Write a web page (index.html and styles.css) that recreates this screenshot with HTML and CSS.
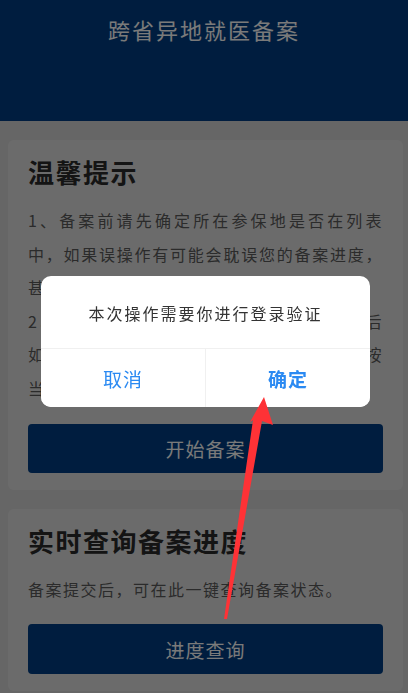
FILE: index.html
```html
<!DOCTYPE html>
<html lang='zh-cn'>

<head>
    <meta charset='utf-8' />
    <meta name='viewport' content='width=device-width, initial-scale=1, user-scalable=no' />
    <title>跨省异地就医备案</title>
    <link rel="stylesheet" href="styles.css">
</head>

<body>
    <div class='page'>
        <header class='top-bar'>
            <h1>跨省异地就医备案</h1>
        </header>

        <section class='card'>
            <h2>温馨提示</h2>
            <p class='desc'>1、备案前请先确定所在参保地是否在列表中，如果误操作有可能会耽误您的备案进度，甚至可能导致备案失败。</p>
            <p class='desc'>2、备案成功后请到定点医院就医，出院后<span class='keep'>如需</span>办理报销，请携带相关材料至参保地按<span class='keep'>当地</span>规定办理。</p>
            <button type='button' class='btn-main'>开始备案</button>
        </section>

        <section class='card'>
            <h2>实时查询备案进度</h2>
            <p class='desc'>备案提交后，可在此一键查询备案状态。</p>
            <button type='button' class='btn-main'>进度查询</button>
        </section>
    </div>

    <div class='mask'>
        <div class='dialog'>
            <div class='dialog-msg'>本次操作需要你进行登录验证</div>
            <div class='dialog-btns'>
                <button type='button' class='dialog-btn'>取消</button>
                <button type='button' class='dialog-btn ok'>确定</button>
            </div>
        </div>
    </div>

    <svg class='arrow' width='408' height='693' viewBox='0 0 408 693'>
        <polygon points='264,397 273,425 262,421 227,619 224,619 253,420 250,422' fill='#fe3236' />
    </svg>
</body>

</html>
```

FILE: styles.css
```css
body {
    margin: 0;
    font-family: "Noto Sans CJK SC", "Noto Sans", sans-serif;
    background-color: #d6d6d6;
    color: #333;
    overflow: hidden;
}

.top-bar {
    height: 121px;
    background-color: #003e84;
    padding-top: 12px;
    box-sizing: border-box;
}

.top-bar h1 {
    margin: 0;
    text-align: center;
    color: #fff;
    font-size: 22px;
    font-weight: normal;
    letter-spacing: 2px;
    line-height: 34px;
}

.card {
    background-color: #e0e0e0;
    border-radius: 6px;
    margin: 19px 5px 18px 8px;
    padding: 15px 20px 17px 20px;
}

.card h2 {
    margin: 0;
    font-size: 26px;
    line-height: 34px;
    letter-spacing: 1.5px;
    font-weight: bold;
    color: #2a2a2a;
}

.desc {
    margin: 0;
    font-size: 16px;
    line-height: 33.6px;
    letter-spacing: 1.5px;
    color: #5a5a5a;
    text-align: justify;
}

.card h2 + .desc {
    margin-top: 15px;
}

.keep {
    white-space: nowrap;
}

.btn-main {
    display: block;
    width: 100%;
    height: 49px;
    margin-top: 18px;
    border: 0;
    border-radius: 4px;
    background-color: #003e84;
    color: #fff;
    font-family: inherit;
    font-size: 19px;
    letter-spacing: 1px;
    cursor: pointer;
}

.card:last-child .btn-main {
    height: 50px;
}

.mask {
    position: fixed;
    inset: 0;
    background-color: rgba(0, 0, 0, .52);
    display: flex;
    align-items: center;
    justify-content: center;
    padding: 0 0 10px 3px;
}

.dialog {
    width: 329px;
    background-color: #fff;
    border-radius: 10px;
    overflow: hidden;
}

.dialog-msg {
    height: 72px;
    display: flex;
    align-items: center;
    justify-content: center;
    padding-top: 2px;
    box-sizing: border-box;
    font-size: 16px;
    letter-spacing: 2px;
    color: #333;
}

.dialog-btns {
    display: flex;
    border-top: 1px solid #f0f0f0;
}

.dialog-btn {
    flex: 1;
    height: 58px;
    border: 0;
    background: #fff;
    color: #2b8af2;
    font-family: inherit;
    font-size: 19px;
    letter-spacing: 1px;
    cursor: pointer;
}

.dialog-btn + .dialog-btn {
    border-left: 1px solid #f0f0f0;
}

.dialog-btn.ok {
    font-weight: bold;
}

.arrow {
    position: fixed;
    top: 0;
    left: 0;
    pointer-events: none;
}
```
